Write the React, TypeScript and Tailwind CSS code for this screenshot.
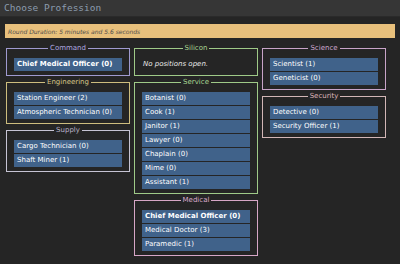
import React from 'react';

type Job = { name: string; count: number; head?: boolean };
type Dept = { title: string; border: string; legend: string; jobs: Job[]; empty?: string };

const left: Dept[] = [
  {
    title: 'Command',
    border: 'border-[#9f9ad0]',
    legend: 'text-[#aea8e0]',
    jobs: [{ name: 'Chief Medical Officer', count: 0, head: true }],
  },
  {
    title: 'Engineering',
    border: 'border-[#cdbd7e]',
    legend: 'text-[#d6c587]',
    jobs: [
      { name: 'Station Engineer', count: 2 },
      { name: 'Atmospheric Technician', count: 0 },
    ],
  },
  {
    title: 'Supply',
    border: 'border-[#c6c4d4]',
    legend: 'text-[#bab4cc]',
    jobs: [
      { name: 'Cargo Technician', count: 0 },
      { name: 'Shaft Miner', count: 1 },
    ],
  },
];

const middle: Dept[] = [
  {
    title: 'Silicon',
    border: 'border-[#9fca88]',
    legend: 'text-[#a8d692]',
    jobs: [],
    empty: 'No positions open.',
  },
  {
    title: 'Service',
    border: 'border-[#9fca88]',
    legend: 'text-[#a8d692]',
    jobs: [
      { name: 'Botanist', count: 0 },
      { name: 'Cook', count: 1 },
      { name: 'Janitor', count: 1 },
      { name: 'Lawyer', count: 0 },
      { name: 'Chaplain', count: 0 },
      { name: 'Mime', count: 0 },
      { name: 'Assistant', count: 1 },
    ],
  },
  {
    title: 'Medical',
    border: 'border-[#d6a6c6]',
    legend: 'text-[#dcaed0]',
    jobs: [
      { name: 'Chief Medical Officer', count: 0, head: true },
      { name: 'Medical Doctor', count: 3 },
      { name: 'Paramedic', count: 1 },
    ],
  },
];

const right: Dept[] = [
  {
    title: 'Science',
    border: 'border-[#c8a4c8]',
    legend: 'text-[#d0a8d0]',
    jobs: [
      { name: 'Scientist', count: 1 },
      { name: 'Geneticist', count: 0 },
    ],
  },
  {
    title: 'Security',
    border: 'border-[#d2b6b6]',
    legend: 'text-[#deb6ba]',
    jobs: [
      { name: 'Detective', count: 0 },
      { name: 'Security Officer', count: 1 },
    ],
  },
];

const Section = ({ dept }: { dept: Dept }) => (
  <fieldset className={`border ${dept.border} px-[7px] pt-[6px] pb-[4px]`}>
    <legend className={`mx-auto px-[2px] text-[7px] leading-[8px] ${dept.legend}`}>{dept.title}</legend>
    {dept.empty ? (
      <div className="h-[13px] flex items-center pl-[1px] italic text-[7px] text-[#e8e8e8]">{dept.empty}</div>
    ) : (
      <div className="flex flex-col gap-px">
        {dept.jobs.map((job) => (
          <div
            key={job.name}
            className={`h-[13px] flex items-center pl-[3px] bg-[#40628a] text-white text-[7px] ${job.head ? 'font-bold' : ''}`}
          >
            {job.name} ({job.count})
          </div>
        ))}
      </div>
    )}
  </fieldset>
);

const Column = ({ depts }: { depts: Dept[] }) => (
  <div className="w-[124px] flex flex-col gap-[2px]">
    {depts.map((d) => (
      <Section key={d.title} dept={d} />
    ))}
  </div>
);

export default function App() {
  return (
    <div className="w-[400px] h-[264px] overflow-hidden bg-[#252525] font-['DejaVu_Sans',sans-serif]">
      <div className="h-[17px] bg-[#363636] border-b border-[#2a2a2a] flex items-center pl-[4px]">
        <span className="font-['DejaVu_Sans_Mono',monospace] text-[9.5px] text-[#8c9cae]">Choose Profession</span>
      </div>
      <div className="px-[5px] pt-[7px]">
        <div className="h-[14px] bg-[#e8c07c] flex items-center pl-[3px] italic text-[6px] text-[#4a4a4a]">
          Round Duration: 5 minutes and 5.6 seconds
        </div>
        <div className="mt-[6px] pl-[1px] flex items-start gap-[4px]">
          <Column depts={left} />
          <Column depts={middle} />
          <Column depts={right} />
        </div>
      </div>
    </div>
  );
}
